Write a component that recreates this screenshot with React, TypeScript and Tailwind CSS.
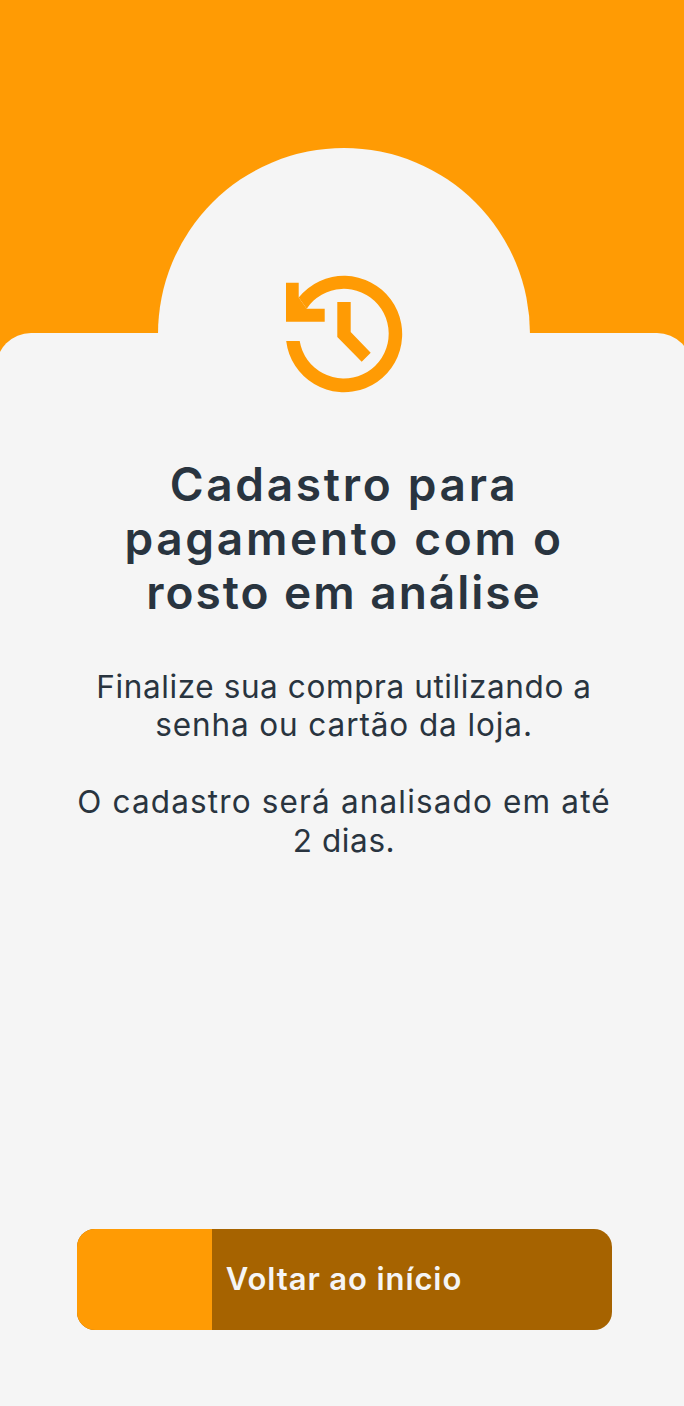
export default function App() {
  return (
    <div className="relative w-[684px] h-[1406px] overflow-hidden bg-[#ff9b04] font-['Inter',sans-serif]">
      <div className="absolute left-[158px] top-[148px] w-[372px] h-[372px] rounded-full bg-[#f5f5f5]" />
      <div className="relative mt-[333px] ml-[-4px] w-[696px] h-[1073px] rounded-t-[35px] bg-[#f5f5f5] flex flex-col items-center">
        <svg className="absolute left-[288px] top-[-59.5px]" width="120" height="120" viewBox="0 0 120 120" fill="#ff9b04">
          <path d="M2.2 67A58.2 58.2 0 1 0 14.7 23.5L22.7 34.7A44.8 44.8 0 1 1 15.7 67Z" />
          <path d="M2 8.7H14.7V23.5L22.7 34.7H40.7V47.7H2Z" />
          <path d="M53.3 28H66.7V58L86.7 78.7L77.7 87.7L53.3 63Z" />
        </svg>
        <h1 className="mt-[124px] text-center text-[46px] leading-[54px] tracking-[2.7px] font-semibold text-[#29343f] w-[560px]">
          Cadastro para
          <br />
          pagamento com o
          <br />
          <span className="tracking-[2px]">rosto em análise</span>
        </h1>
        <div className="mt-[48.5px] text-center text-[31.5px] leading-[38.5px] tracking-[0.6px] text-[#29343f]">
          <p>
            Finalize sua compra utilizando a
            <br />
            <span className="tracking-[0.9px]">senha ou cartão da loja.</span>
          </p>
          <p className="mt-[38.5px]">
            <span className="tracking-[1.15px]">O cadastro será analisado em até</span>
            <br />2 dias.
          </p>
        </div>
        <button className="relative mt-auto mb-[76px] w-[535px] h-[101px] rounded-[18px] overflow-hidden bg-[#a66300] flex items-center justify-center">
          <span className="absolute left-0 top-0 bottom-0 w-[135.5px] bg-[#ff9b04]" />
          <span className="relative text-[31px] tracking-[0.9px] font-semibold text-[#f5f5f5]">Voltar ao início</span>
        </button>
      </div>
    </div>
  );
}
